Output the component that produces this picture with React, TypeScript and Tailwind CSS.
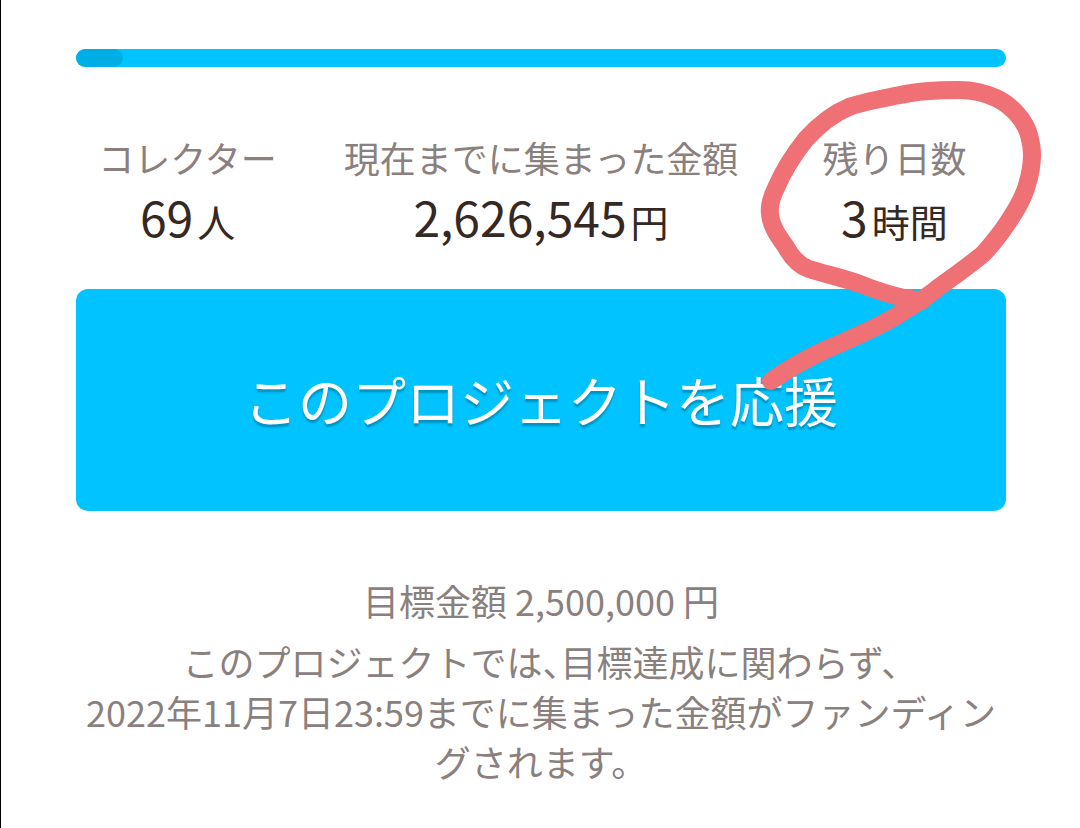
import type { ReactNode } from 'react';

type StatProps = {
	label: string;
	value: string;
	unit: string;
};

const Stat = ({ label, value, unit }: StatProps) => {
	return (
		<div className="flex flex-col items-center whitespace-nowrap">
			<dt className="text-[36px] leading-[54px] text-[#8a807d]">{label}</dt>
			<dd className="flex items-baseline gap-1 text-[#362823]">
				<span className="text-5xl leading-[64px]">{value}</span>
				<span className="text-[38px] leading-[64px]">{unit}</span>
			</dd>
		</div>
	);
};

const ProgressBar = () => {
	return (
		<div
			role="progressbar"
			aria-label="達成率"
			aria-valuenow={105}
			aria-valuemin={0}
			className="h-[18px] w-full overflow-hidden rounded-full bg-[#00c3ff]"
		>
			<div className="h-full w-[5%] rounded-full bg-[#00aee6]" />
		</div>
	);
};

// Hand drawn marker around the remaining time
const MarkerCircle = () => {
	return (
		<svg
			aria-hidden="true"
			viewBox="0 0 320 340"
			className="pointer-events-none absolute -top-[60px] -right-[54px] h-[340px] w-[320px]"
			fill="none"
			stroke="#ef7075"
			strokeWidth="18"
			strokeLinecap="round"
			strokeLinejoin="round"
		>
			<path d="M31 311 C48 299 68 288 85 280 C112 268 140 257 161 243 C175 234 186 228 199 217 C216 205 230 195 243 184 C250 177 256 169 262 161 C274 144 283 130 287 115 C291 102 292 94 292 85 C292 78 291 72 289 65 C285 50 271 35 256 28 C243 22 232 20 219 20 C199 20 178 21 160 25 C140 29 122 32 109 37 C92 44 77 57 66 69 C54 84 42 104 36 118 C31 128 29 136 30 144 C31 156 38 166 46 177 C52 188 60 196 69 199 C85 204 103 208 120 214 C135 220 151 225 164 228 L182 231" />
		</svg>
	);
};

const Note = ({ children }: { children: ReactNode }) => {
	return <p className="text-center text-[36px] leading-[50px] text-[#8a807d]">{children}</p>;
};

export default function App() {
	return (
		<main
			lang="ja"
			className="min-h-screen overflow-hidden border-l border-black bg-white pt-[49px] pr-[74px] pb-9 pl-[75px] font-['Noto_Sans_CJK_JP',sans-serif]"
		>
			<ProgressBar />
			<div className="relative mt-[63px]">
				<dl className="grid grid-cols-[24fr_52fr_24fr]">
					<Stat label="コレクター" value="69" unit="人" />
					<Stat label="現在までに集まった金額" value="2,626,545" unit="円" />
					<Stat label="残り日数" value="3" unit="時間" />
				</dl>
				<button
					type="button"
					className="mt-9 h-[222px] w-full rounded-xl bg-[#00c3ff] pb-0.5 text-[54px] text-white [text-shadow:0_3px_2px_rgba(0,0,0,0.25)]"
				>
					このプロジェクトを応援
				</button>
				<MarkerCircle />
			</div>
			<section className="mt-16 flex flex-col gap-[11px]">
				<Note>目標金額 2,500,000 円</Note>
				<Note>
					<span className="[font-feature-settings:'halt']">このプロジェクトでは、目標達成に関わらず、</span>
					<br />
					2022年11月7日23:59までに集まった金額がファンディングされます。
				</Note>
			</section>
		</main>
	);
}
